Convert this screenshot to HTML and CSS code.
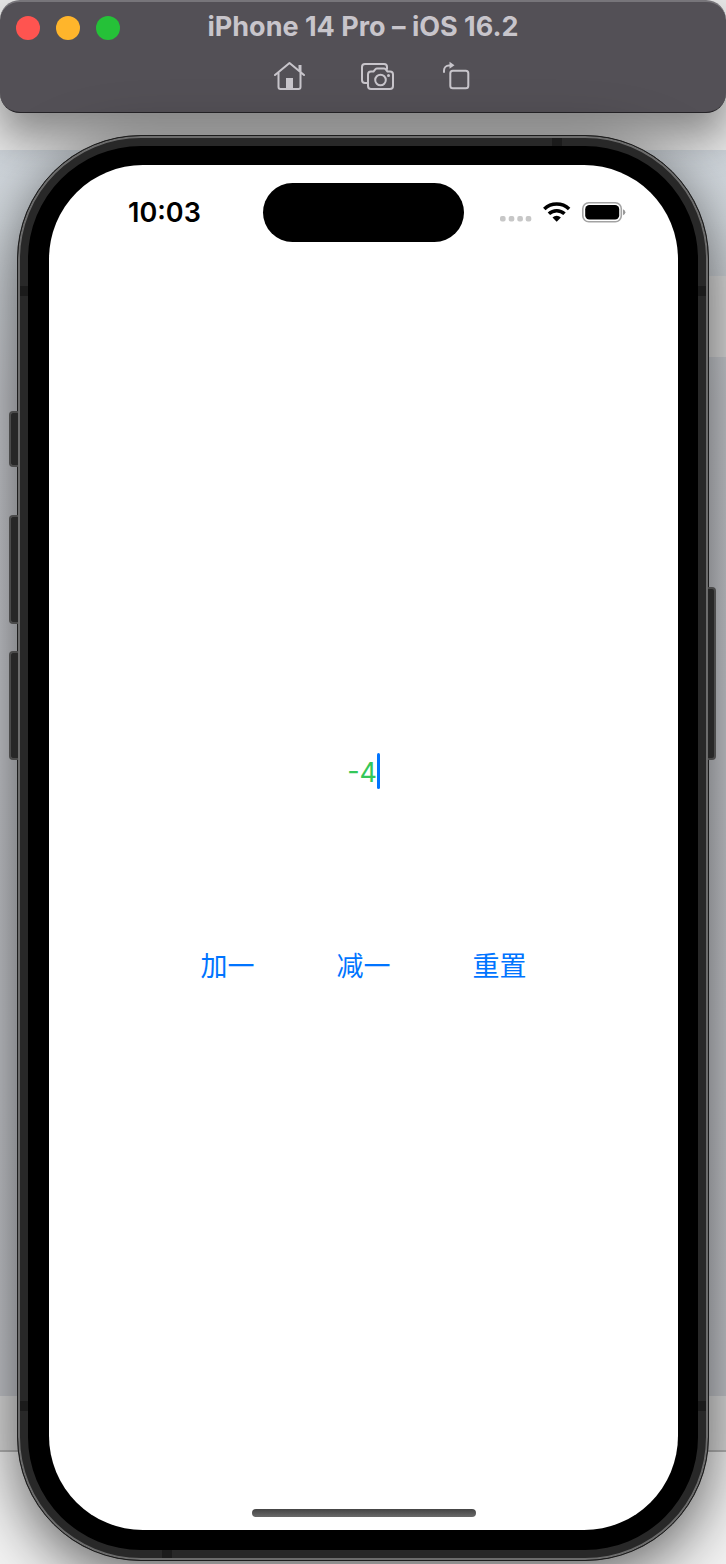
FILE: index.html
```html
<!DOCTYPE html>
<html lang="zh-CN">
<head>
<meta charset="utf-8">
<meta name="viewport" content="width=device-width, initial-scale=1">
<title>iPhone 14 Pro – iOS 16.2</title>
<link rel="stylesheet" href="styles.css">
</head>
<body>
<header class="titlebar">
  <div class="title-row">
    <div class="lights">
      <button class="light close" aria-label="Close"></button>
      <button class="light minimize" aria-label="Minimize"></button>
      <button class="light expand" aria-label="Zoom"></button>
    </div>
    <h1 class="title">iPhone 14 Pro – iOS 16.2</h1>
  </div>
  <div class="toolbar">
    <button class="tool tool-home" aria-label="Home">
      <svg width="31" height="30" viewBox="0 0 31 30" fill="none" stroke="currentColor" stroke-width="2" stroke-linecap="round" stroke-linejoin="round"><path d="M1 14 15.500 2 30 14M4.500 12v14a2 2 0 0 0 2 2h18a2 2 0 0 0 2-2V12"/><path d="M12 28V17h7v11z" fill="currentColor" stroke="none"/><path d="M24.500 9V4h3v7z" fill="currentColor" stroke="none"/></svg>
    </button>
    <button class="tool" aria-label="Screenshot">
      <svg width="33" height="30" viewBox="0 0 33 30" fill="none" stroke="currentColor" stroke-width="2" stroke-linecap="round" stroke-linejoin="round"><path d="M6 22H4a3 3 0 0 1-3-3V6a3 3 0 0 1 3-3h19a3 3 0 0 1 3 3v2"/><path d="M10 10.500h2.500l2-2.300q.6-.7 1.500-.7h7q.9 0 1.500.7l2 2.300H29a3 3 0 0 1 3 3V25a3 3 0 0 1-3 3H10a3 3 0 0 1-3-3V13.500a3 3 0 0 1 3-3z"/><circle cx="19.500" cy="19" r="5.300"/><circle cx="27.500" cy="14.600" r="1.500" fill="currentColor" stroke="none"/></svg>
    </button>
    <button class="tool" aria-label="Rotate">
      <svg width="27" height="30" viewBox="0 0 27 30" fill="none" stroke="currentColor" stroke-width="2" stroke-linecap="round" stroke-linejoin="round"><path d="M1 11V9.500a5 5 0 0 1 5-5h1"/><path d="M6.500.8v7L11.500 4.300z" fill="currentColor" stroke="none"/><rect x="7.300" y="9.800" width="18" height="17.500" rx="2.500"/></svg>
    </button>
  </div>
</header>

<section class="device">
  <i class="key key-mute"></i><i class="key key-up"></i><i class="key key-down"></i><i class="key key-power"></i>
  <i class="band band-top"></i><i class="band band-bottom"></i>
  <i class="band band-lt"></i><i class="band band-lb"></i><i class="band band-rt"></i><i class="band band-rb"></i>
  <div class="screen">
    <div class="status">
      <time class="clock">10:03</time>
      <div class="island"></div>
      <div class="indicators">
        <svg width="32" height="22" viewBox="0 0 32 22" fill="#c7c7c7"><rect x="0" y="14" width="5.600" height="5.600" rx="2"/><rect x="8.700" y="14" width="5.600" height="5.600" rx="2"/><rect x="17.300" y="14" width="5.600" height="5.600" rx="2"/><rect x="25.700" y="14" width="5.600" height="5.600" rx="2"/></svg>
        <svg width="28" height="22" viewBox="0 0 28 22" fill="none" stroke="#000" stroke-width="3.600"><path d="M1.300 7a18 18 0 0 1 24.800 0"/><path d="M5.900 11.800a11.500 11.500 0 0 1 15.600 0"/><path d="M9.500 15.500a6.200 6.200 0 0 1 8.400 0L13.700 19.800z" fill="#000" stroke="none"/></svg>
        <svg width="44" height="22" viewBox="0 0 44 22"><rect x=".8" y=".8" width="38.500" height="19" rx="6" fill="none" stroke="#a3a3a3" stroke-width="1.600"/><rect x="3.200" y="3.100" width="34" height="14.500" rx="4.200"/><path d="M41 7.300q2.400.8 2.400 3t-2.400 3z" fill="#999"/></svg>
      </div>
    </div>
    <main class="counter">
      <div class="field">
        <input class="value" type="text" value="-4" aria-label="计数">
        <span class="caret"></span>
      </div>
      <div class="actions">
        <button class="action">加一</button>
        <button class="action">减一</button>
        <button class="action">重置</button>
      </div>
    </main>
    <div class="home-bar"></div>
  </div>
</section>
</body>
</html>
```
FILE: styles.css
```css
* {
  box-sizing: border-box;
}

body {
  display: flex;
  flex-direction: column;
  gap: 22px;
  min-height: 100vh;
  margin: 0;
  padding-bottom: 3px;
  overflow-x: hidden;
  font-family: Inter, "Noto Sans CJK SC", sans-serif;
  background:
    linear-gradient(#ddd, #ddd) right 276px / 40px 81px no-repeat,
    linear-gradient(#e6e6e6 150px, #cdd3d9 150px, #d2d8dd 220px, #c8cacf 400px, #c5c7cc 1396px, #dcdcdc 1396px, #dcdcdc 1450px, #b4b4b4 1450px, #b4b4b4 1452px, #f2f2f2 1452px);
}

button {
  padding: 0;
  border: 0;
  background: none;
  font: inherit;
}

svg {
  display: block;
}

.titlebar {
  display: flex;
  flex-direction: column;
  gap: 19px;
  padding: 12px 16px 21px;
  border-top: 2px solid #77757a;
  border-bottom: 1px solid #252327;
  border-radius: 20px;
  background: #535056;
  color: #c8c5cb;
  box-shadow: 0 24px 40px rgba(0, 0, 0, 0.4);
}

.title-row {
  display: grid;
  grid-template-columns: 1fr auto 1fr;
  align-items: center;
  height: 28px;
}

.lights {
  display: flex;
  gap: 16px;
}

.light {
  width: 24px;
  height: 24px;
  border-radius: 50%;
}

.close {
  background: #ff5450;
}

.minimize {
  background: #ffb52b;
}

.expand {
  background: #25c138;
}

.title {
  margin: 0;
  padding-bottom: 2px;
  font-size: 27px;
  line-height: 26px;
  font-weight: 700;
}

.toolbar {
  display: flex;
  justify-content: center;
  gap: 49px;
  padding-left: 17px;
}

.tool {
  color: inherit;
}

.tool-home {
  padding-right: 7px;
}

.device {
  position: relative;
  display: flex;
  flex: 1;
  margin: 0 17px;
  padding: 29px 30px 30px 31px;
  border: 1px solid #1d1d1d;
  border-radius: 124px;
  background: #000;
  box-shadow:
    inset 0 0 0 2px #6c6c6c,
    inset 0 0 0 10px #282828,
    0 16px 60px rgba(0, 0, 0, 0.6);
}

.key {
  position: absolute;
  left: -9px;
  width: 9px;
  height: 109px;
  border: 2px solid #4a4a4a;
  border-right: 0;
  border-radius: 4px 0 0 4px;
  background: #272727;
}

.key-mute {
  top: 275px;
  height: 56px;
}

.key-up {
  top: 379px;
}

.key-down {
  top: 515px;
}

.key-power {
  top: 451px;
  right: -8px;
  left: auto;
  width: 8px;
  height: 173px;
  border-right: 2px solid #4a4a4a;
  border-left: 0;
  border-radius: 0 4px 4px 0;
}

.band {
  position: absolute;
  width: 8px;
  height: 10px;
  background: #1b1b1b;
}

.band-top {
  top: 2px;
  right: 146px;
  width: 10px;
  height: 8px;
}

.band-bottom {
  bottom: 2px;
  left: 144px;
  width: 10px;
  height: 8px;
}

.band-lt,
.band-rt {
  top: 150px;
}

.band-lb,
.band-rb {
  bottom: 149px;
}

.band-lt,
.band-lb {
  left: 2px;
}

.band-rt,
.band-rb {
  right: 2px;
}

.screen {
  display: flex;
  flex: 1;
  flex-direction: column;
  align-items: center;
  padding: 18px 0 13px;
  border-radius: 94px;
  background: #fff;
}

.status {
  display: grid;
  grid-template-columns: 1fr auto 1fr;
  align-items: center;
  width: 100%;
}

.clock {
  padding-left: 79px;
  font-size: 27px;
  line-height: 32px;
  font-weight: 600;
}

.island {
  width: 201px;
  height: 59px;
  border-radius: 30px;
  background: #000;
}

.indicators {
  display: flex;
  justify-content: flex-end;
  gap: 11px;
  padding-right: 52px;
}

.counter {
  display: flex;
  flex: 1;
  flex-direction: column;
  align-items: center;
  justify-content: center;
  gap: 158px;
  padding-bottom: 15px;
}

.field {
  display: flex;
}

.value {
  width: 30px;
  height: 36px;
  padding: 3px 0 0;
  border: 0;
  outline: 0;
  background: none;
  color: #34c759;
  font: 400 27px/33px Inter, sans-serif;
  text-align: right;
}

.caret {
  width: 3px;
  border-radius: 2px;
  background: #0074ff;
}

.actions {
  display: flex;
  gap: 82px;
}

.action {
  color: #0074ff;
  font-family: "Noto Sans CJK SC", sans-serif;
  font-size: 27px;
  line-height: 36px;
}

.home-bar {
  width: 224px;
  height: 8px;
  border-radius: 4px;
  background: linear-gradient(#444, #6a6a6a);
}
```
